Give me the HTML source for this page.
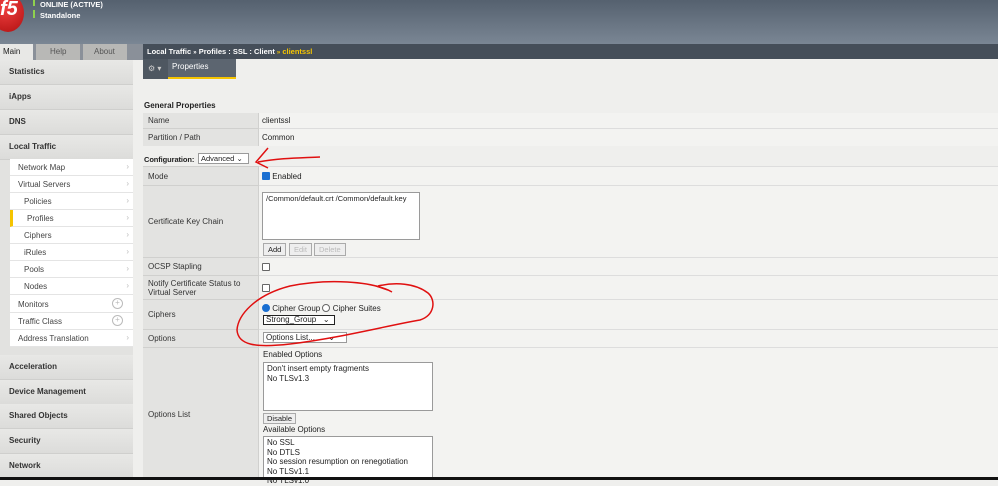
<!DOCTYPE html>
<html><head><style>
*{margin:0;padding:0;box-sizing:border-box}
body{width:998px;height:480px;overflow:hidden;background:#efefed;font-family:"Liberation Sans",Arial,sans-serif;font-size:8px;color:#222;position:relative}
.a{position:absolute}
.hdr{left:0;top:0;width:998px;height:44px;background:linear-gradient(#55616f,#7a8694)}
.side{left:0;top:60px;width:133px;height:420px;background:#e2e2e0}
.sec{position:absolute;left:0;width:133px;height:25px;border-bottom:1px solid #cfcfcd;background:linear-gradient(#e8e8e6,#dcdcda);font-weight:bold;font-size:8px;padding:7px 0 0 9px;color:#333}
.sub{position:absolute;left:10px;width:123px;height:17px;background:#fff;border-bottom:1px solid #e4e4e4;font-size:8px;padding:4px 0 0 8px;color:#444}
.sub.i{padding-left:14px}
.sub:after{content:"›";position:absolute;right:4px;top:3px;color:#bbb}
.sub.p:after{content:"+";right:10px;top:2px;width:9px;height:9px;border:1px solid #bbb;border-radius:50%;font-size:8px;line-height:8px;text-align:center}
.lab{position:absolute;left:143px;width:116px;background:#e3e3e1;border-right:1px solid #d0d0ce;padding:0 0 0 5px;font-size:8px;color:#333;display:flex;align-items:center}
.val{position:absolute;left:259px;width:739px;background:#f3f3f1;font-size:8px;padding-left:3px;display:flex;align-items:center}
.box{position:absolute;background:#fff;border:1px solid #9a9a9a;font-size:8px;padding:1px 3px;line-height:10px}
.btn{position:absolute;border:1px solid #aaa;background:#eee;font-size:7.5px;padding:1px 4px;color:#222}
.cb{display:inline-block;width:8px;height:8px;border:1px solid #666;background:#fff;border-radius:1px;vertical-align:-1px}
</style></head><body>
<div class="a hdr"></div>
<div class="a" style="left:-8px;top:-6px;width:32px;height:38px;border-radius:50%;background:radial-gradient(circle at 40% 35%,#f04040,#b01010);color:#fff;font-weight:bold;font-size:20px;padding:4px 0 0 8px;font-style:italic">f5</div>
<div class="a" style="left:33px;top:0;width:2px;height:6px;background:#8fd14f"></div>
<div class="a" style="left:33px;top:10px;width:2px;height:8px;background:#8fd14f"></div>
<div class="a" style="left:40px;top:0px;color:#fff;font-weight:bold;font-size:7.5px">ONLINE (ACTIVE)</div>
<div class="a" style="left:40px;top:11px;color:#fff;font-weight:bold;font-size:7.5px">Standalone</div>
<div class="a" style="left:0;top:44px;width:143px;height:16px;background:#8a9099"></div>
<div class="a" style="left:0;top:44px;width:33px;height:17px;background:#e8e8e6;font-size:8px;padding:3px 0 0 3px">Main</div>
<div class="a" style="left:36px;top:44px;width:44px;height:16px;background:#b8b8b6;font-size:8px;padding:3px 0 0 14px;color:#555">Help</div>
<div class="a" style="left:83px;top:44px;width:44px;height:16px;background:#b8b8b6;font-size:8px;padding:3px 0 0 11px;color:#555">About</div>
<div class="a" style="left:143px;top:44px;width:855px;height:15px;background:#454e59;color:#fff;font-weight:bold;font-size:7.5px;padding:3px 0 0 4px">Local Traffic <span style="font-size:6px">»</span> Profiles : SSL : Client <span style="font-size:6px;color:#f5c400">»</span> <span style="color:#f5c400">clientssl</span></div>
<div class="a" style="left:143px;top:59px;width:25px;height:20px;background:#4e5761;color:#ccc;font-size:8px;padding:5px 0 0 5px">⚙ ▾</div>
<div class="a" style="left:168px;top:59px;width:68px;height:20px;background:#5c6570;color:#fff;font-size:8px;padding:3px 0 0 4px;border-bottom:2px solid #f5c400">Properties</div>
<div class="a side"></div>
<div class="sec" style="top:60px">Statistics</div>
<div class="sec" style="top:85px">iApps</div>
<div class="sec" style="top:110px">DNS</div>
<div class="sec" style="top:135px">Local Traffic</div>
<div class="a" style="left:10px;top:159px;width:123px;height:188px;background:#fff"></div>
<div class="sub" style="top:159px">Network Map</div>
<div class="sub" style="top:176px">Virtual Servers</div>
<div class="sub i" style="top:193px">Policies</div>
<div class="sub i" style="top:210px;border-left:3px solid #f5c400">Profiles</div>
<div class="sub i" style="top:227px">Ciphers</div>
<div class="sub i" style="top:244px">iRules</div>
<div class="sub i" style="top:261px">Pools</div>
<div class="sub i" style="top:278px">Nodes</div>
<div class="sub p" style="top:296px">Monitors</div>
<div class="sub p" style="top:313px">Traffic Class</div>
<div class="sub" style="top:330px">Address Translation</div>
<div class="sec" style="top:355px">Acceleration</div>
<div class="sec" style="top:380px">Device Management</div>
<div class="sec" style="top:404px">Shared Objects</div>
<div class="sec" style="top:429px">Security</div>
<div class="sec" style="top:454px">Network</div>

<div class="a" style="left:144px;top:101px;font-weight:bold;font-size:8px">General Properties</div>
<div class="lab" style="top:113px;height:16px;border-bottom:1px solid #d0d0ce">Name</div><div class="val" style="top:113px;height:16px;border-bottom:1px solid #ddd">clientssl</div>
<div class="lab" style="top:129px;height:17px">Partition / Path</div><div class="val" style="top:129px;height:17px">Common</div>
<div class="a" style="left:144px;top:155px;font-weight:bold;font-size:7.5px;letter-spacing:-0.1px">Configuration:</div>
<div class="box" style="left:198px;top:153px;width:51px;height:11px;padding:0 2px;font-size:7.5px;line-height:9px">Advanced ⌄</div>
<div class="lab" style="top:166px;height:19px;border-top:1px solid #d0d0ce">Mode</div><div class="val" style="top:166px;height:19px;border-top:1px solid #ddd"><span class="cb" style="background:#1a6fd1;border-color:#1a6fd1"></span>&nbsp;Enabled</div>
<div class="lab" style="top:185px;height:72px;border-top:1px solid #d0d0ce">Certificate Key Chain</div><div class="val" style="top:185px;height:72px;border-top:1px solid #ddd"></div>
<div class="box" style="left:262px;top:192px;width:158px;height:48px;font-size:7.5px">/Common/default.crt /Common/default.key</div>
<div class="btn" style="left:263px;top:243px">Add</div><div class="btn" style="left:289px;top:243px;color:#bbb">Edit</div><div class="btn" style="left:314px;top:243px;color:#bbb">Delete</div>
<div class="lab" style="top:257px;height:18px;border-top:1px solid #d0d0ce">OCSP Stapling</div><div class="val" style="top:257px;height:18px;border-top:1px solid #ddd"><span class="cb"></span></div>
<div class="lab" style="top:275px;height:24px;border-top:1px solid #d0d0ce;line-height:9px">Notify Certificate Status to<br>Virtual Server</div><div class="val" style="top:275px;height:24px;border-top:1px solid #ddd"><span class="cb"></span></div>
<div class="lab" style="top:299px;height:30px;border-top:1px solid #d0d0ce">Ciphers</div><div class="val" style="top:299px;height:30px;border-top:1px solid #ddd"></div>
<div class="a" style="left:262px;top:304px;font-size:8px"><span class="cb" style="border-radius:50%;background:#1a6fd1;border-color:#1a6fd1"></span> Cipher Group <span class="cb" style="border-radius:50%"></span> Cipher Suites</div>
<div class="box" style="left:263px;top:315px;width:72px;height:10px;border:1px solid #222;padding:0 2px;line-height:8px">Strong_Group &nbsp;&nbsp;⌄</div>
<div class="lab" style="top:329px;height:18px;border-top:1px solid #d0d0ce">Options</div><div class="val" style="top:329px;height:18px;border-top:1px solid #ddd"></div>
<div class="box" style="left:263px;top:332px;width:84px;height:11px;padding:0 2px;line-height:9px">Options List... &nbsp;&nbsp;&nbsp;&nbsp;&nbsp;⌄</div>
<div class="lab" style="top:347px;height:133px;border-top:1px solid #d0d0ce">Options List</div><div class="val" style="top:347px;height:133px;border-top:1px solid #ddd"></div>
<div class="a" style="left:263px;top:350px">Enabled Options</div>
<div class="box" style="left:263px;top:362px;width:170px;height:49px">Don't insert empty fragments<br>No TLSv1.3</div>
<div class="btn" style="left:263px;top:413px;padding:0 3px">Disable</div>
<div class="a" style="left:263px;top:425px">Available Options</div>
<div class="box" style="left:263px;top:436px;width:170px;height:44px;line-height:9.5px">No SSL<br>No DTLS<br>No session resumption on renegotiation<br>No TLSv1.1<br>No TLSv1.0</div>
<div class="a" style="left:0;top:477px;width:998px;height:3px;background:#111"></div>
<svg class="a" style="left:0;top:0" width="998" height="480">
<g fill="none" stroke="#e01010" stroke-width="1.5">
<path d="M320 157 C300 158 280 158 258 162"/>
<path d="M268 148 L256 162 L268 168"/>
<path d="M388 290 C370 282 330 278 290 286 C255 295 238 315 237 330 C238 345 255 348 290 344 C340 338 390 325 420 320 C435 315 436 300 428 293 C415 283 395 282 378 286"/>
<path d="M376 286 L388 290 L392 292"/>
</g></svg>
</body></html>
